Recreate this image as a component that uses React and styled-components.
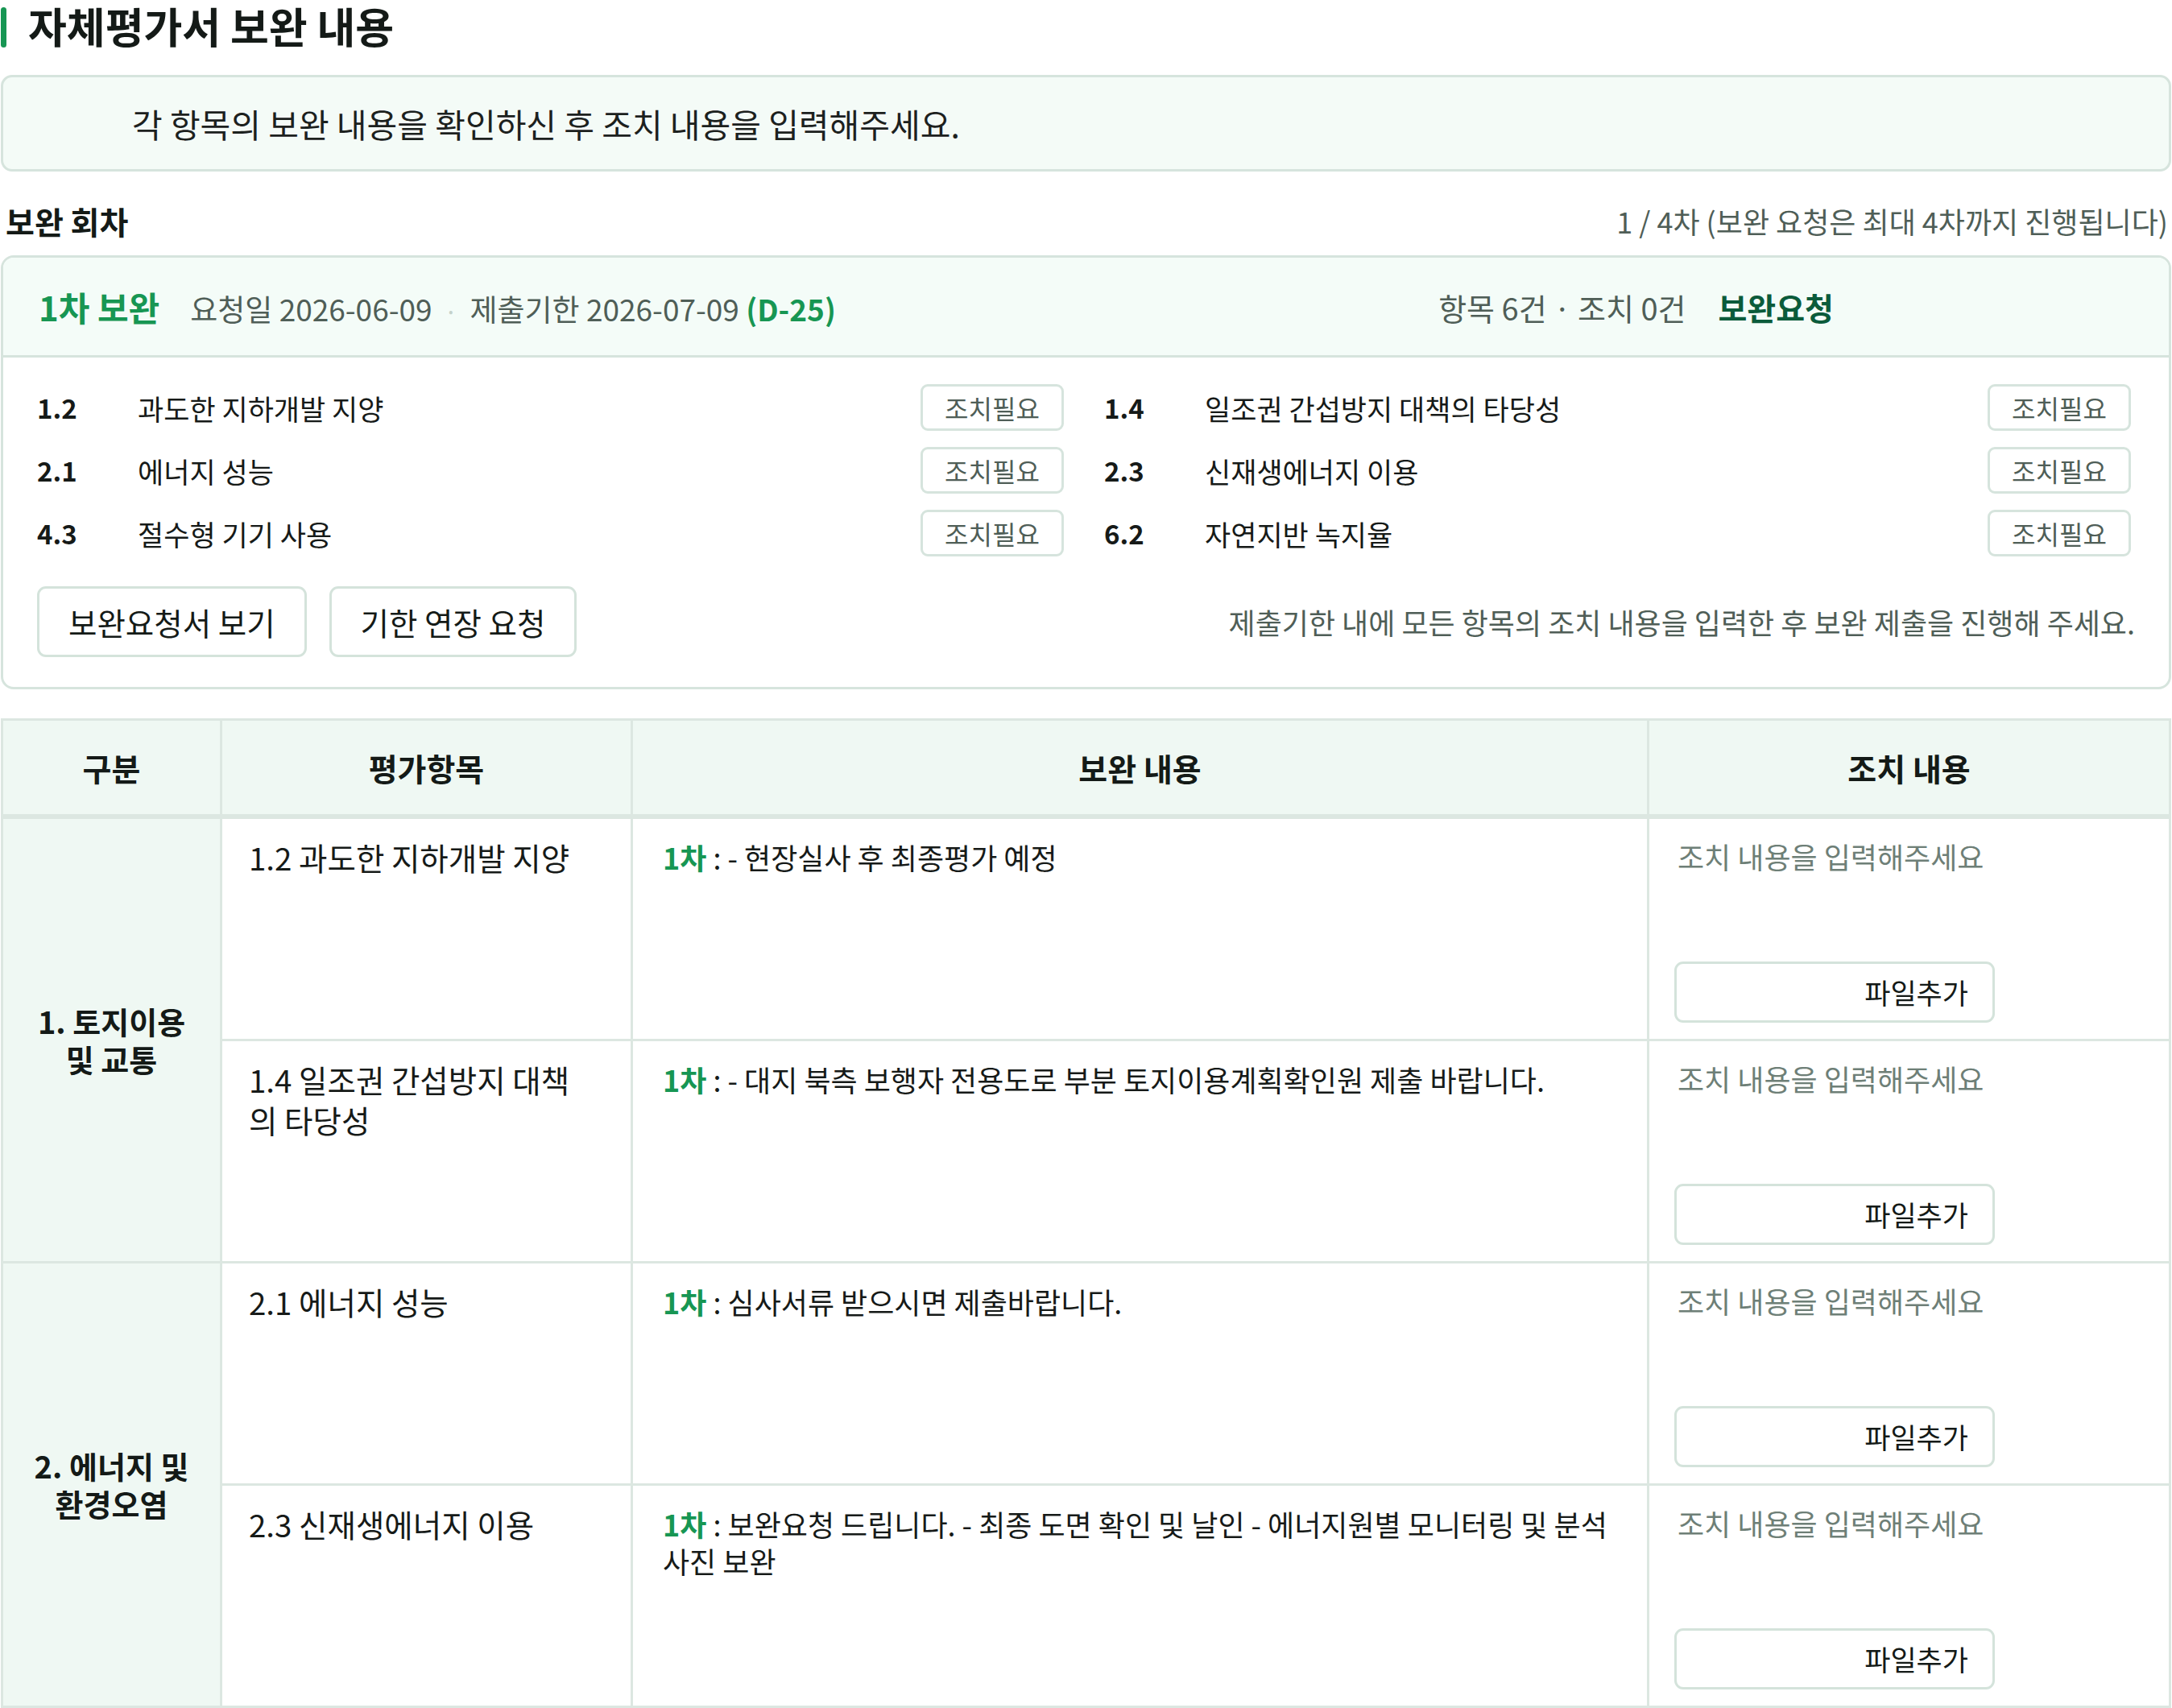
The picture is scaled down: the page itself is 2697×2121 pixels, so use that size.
import React from 'react';
import styled, { createGlobalStyle } from 'styled-components';

const GlobalStyle = createGlobalStyle`
    * { box-sizing: border-box; }
    body {
        margin: 0;
        background: #ffffff;
        color: #161a18;
        font-family: "Noto Sans CJK KR", "Noto Sans", sans-serif;
    }
`;

const Page = styled.div`
    padding: 0 1px;
`;

const Title = styled.h2`
    display: flex;
    align-items: center;
    gap: 27px;
    margin: 0;
    height: 64px;
    font-size: 52px;
    line-height: 64px;
    font-weight: 700;
    color: #141a17;
    &::before {
        content: '';
        width: 7px;
        height: 50px;
        margin-top: 4px;
        border-radius: 4px;
        background: #179653;
    }
`;

const Notice = styled.div`
    margin-top: 29px;
    padding: 31px 160px;
    border: 3px solid #d6e4dd;
    border-radius: 14px;
    background: #f4fbf7;
    font-size: 41px;
    line-height: 52px;
    color: #1c211e;
`;

const SectionRow = styled.div`
    display: flex;
    justify-content: space-between;
    align-items: center;
    margin-top: 36px;
    height: 50px;
    padding: 0 4px 0 6px;
`;

const SectionTitle = styled.h3`
    margin: 0;
    font-size: 39px;
    font-weight: 700;
    color: #141a17;
`;

const SectionMeta = styled.span`
    font-size: 36px;
    color: #4f5e57;
`;

const RoundCard = styled.section`
    margin-top: 18px;
    border: 3px solid #d6e4dd;
    border-radius: 16px;
    overflow: hidden;
`;

const RoundHeader = styled.div`
    display: flex;
    justify-content: space-between;
    align-items: center;
    height: 124px;
    padding: 0 44px;
    background: #f4fcf8;
    border-bottom: 3px solid #d6e4dd;
`;

const HeaderGroup = styled.div`
    display: flex;
    align-items: baseline;
    gap: ${({ gap }) => gap || 0}px;
    margin-right: ${({ offset }) => offset || 0}px;
`;

const RoundName = styled.strong`
    font-size: 42px;
    font-weight: 700;
    color: #179653;
    margin-right: 38px;
`;

const MetaText = styled.span`
    font-size: ${({ size }) => size || 37}px;
    color: #4f5e57;
`;

const Dot = styled.span`
    margin: 0 15px;
    font-size: 30px;
    color: #c5d2cb;
`;

const Dday = styled.b`
    color: #179653;
    font-weight: 700;
`;

const Status = styled.strong`
    font-size: 39px;
    font-weight: 700;
    color: #0b5b3b;
`;

const RoundBody = styled.div`
    padding: 33px 47px 37px 42px;
`;

const ItemGrid = styled.div`
    display: grid;
    grid-template-columns: 1fr 1fr;
    column-gap: 50px;
    row-gap: 20px;
`;

const ItemRow = styled.div`
    display: flex;
    align-items: center;
    height: 58px;
    font-size: 35px;
    color: #161a18;
`;

const ItemNo = styled.b`
    width: 125px;
    flex-shrink: 0;
    font-size: 33px;
    font-weight: 700;
`;

const ItemName = styled.span`
    flex: 1;
`;

const Badge = styled.span`
    display: flex;
    align-items: center;
    justify-content: center;
    width: 178px;
    height: 58px;
    border: 3px solid #d6e4dd;
    border-radius: 9px;
    background: #fff;
    font-size: 32px;
    color: #4f5e57;
`;

const ActionRow = styled.div`
    display: flex;
    align-items: center;
    justify-content: space-between;
    margin: 37px -5px 0 0;
`;

const ButtonGroup = styled.div`
    display: flex;
    gap: 28px;
`;

const OutlineButton = styled.button`
    height: 88px;
    padding: 0 36px;
    border: 3px solid #d4e3db;
    border-radius: 11px;
    background: #fff;
    font-family: inherit;
    font-size: 38.5px;
    color: #141a17;
    cursor: pointer;
`;

const Hint = styled.p`
    margin: 0;
    font-size: 36px;
    color: #4f5e57;
`;

const Table = styled.table`
    width: 100%;
    margin-top: 36px;
    border-collapse: collapse;
    table-layout: fixed;
    border: 3px solid #dce7e1;
`;

const Th = styled.th`
    height: 120px;
    background: #eff8f3;
    border: 3px solid #dce7e1;
    border-bottom-width: 6px;
    font-size: 39px;
    font-weight: 700;
    color: #141a17;
`;

const GroupCell = styled.td`
    padding: 0 30px;
    background: #eff8f3;
    border: 3px solid #dce7e1;
    text-align: center;
    vertical-align: middle;
    font-size: 38px;
    line-height: 47px;
    font-weight: 700;
    color: #141a17;
`;

const ItemCell = styled.td`
    padding: 22px 50px 0 33px;
    border: 3px solid #dce7e1;
    vertical-align: top;
    font-size: 38.5px;
    line-height: 50px;
    color: #161a18;
`;

const RequestCell = styled.td`
    padding: 24px 36px 0 37px;
    border: 3px solid #dce7e1;
    vertical-align: top;
    font-size: 36px;
    line-height: 46px;
    color: #161a18;
`;

const Round = styled.b`
    color: #179653;
    font-weight: 700;
`;

const ActionCell = styled.td`
    padding: 23px 40px 20px 31px;
    border: 3px solid #dce7e1;
    vertical-align: top;
`;

const ActionBox = styled.div`
    display: flex;
    flex-direction: column;
    gap: 20px;
`;

const ActionInput = styled.textarea`
    height: 134px;
    padding: 0 4px;
    border: none;
    outline: none;
    resize: none;
    font-family: inherit;
    font-size: 36px;
    line-height: 46px;
    color: #161a18;
    &::placeholder {
        color: #6e7f77;
    }
`;

const FileButton = styled.button`
    width: 398px;
    height: 76px;
    padding: 0 30px;
    border: 3px solid #d4e3db;
    border-radius: 11px;
    background: #fff;
    text-align: right;
    font-family: inherit;
    font-size: 35px;
    color: #141a17;
    cursor: pointer;
`;

const items = [
    { no: '1.2', name: '과도한 지하개발 지양' },
    { no: '1.4', name: '일조권 간섭방지 대책의 타당성' },
    { no: '2.1', name: '에너지 성능' },
    { no: '2.3', name: '신재생에너지 이용' },
    { no: '4.3', name: '절수형 기기 사용' },
    { no: '6.2', name: '자연지반 녹지율' },
];

const groups = [
    {
        title: ['1. 토지이용', '및 교통'],
        rows: [
            { item: '1.2 과도한 지하개발 지양', text: '- 현장실사 후 최종평가 예정' },
            { item: '1.4 일조권 간섭방지 대책의 타당성', text: '- 대지 북측 보행자 전용도로 부분 토지이용계획확인원 제출 바랍니다.' },
        ],
    },
    {
        title: ['2. 에너지 및', '환경오염'],
        rows: [
            { item: '2.1 에너지 성능', text: '심사서류 받으시면 제출바랍니다.' },
            { item: '2.3 신재생에너지 이용', text: '보완요청 드립니다. - 최종 도면 확인 및 날인 - 에너지원별 모니터링 및 분석 사진 보완' },
        ],
    },
];

const App = () => {
    return (
        <Page>
            <GlobalStyle />
            <Title>자체평가서 보완 내용</Title>
            <Notice>각 항목의 보완 내용을 확인하신 후 조치 내용을 입력해주세요.</Notice>

            <SectionRow>
                <SectionTitle>보완 회차</SectionTitle>
                <SectionMeta>1 / 4차 (보완 요청은 최대 4차까지 진행됩니다)</SectionMeta>
            </SectionRow>

            <RoundCard>
                <RoundHeader>
                    <HeaderGroup>
                        <RoundName>1차 보완</RoundName>
                        <MetaText>요청일 2026-06-09</MetaText>
                        <Dot>·</Dot>
                        <MetaText>제출기한 2026-07-09 <Dday>(D-25)</Dday></MetaText>
                    </HeaderGroup>
                    <HeaderGroup gap={40} offset={372}>
                        <MetaText size={38}>항목 6건 · 조치 0건</MetaText>
                        <Status>보완요청</Status>
                    </HeaderGroup>
                </RoundHeader>
                <RoundBody>
                    <ItemGrid>
                        {items.map(it => (
                            <ItemRow key={it.no}>
                                <ItemNo>{it.no}</ItemNo>
                                <ItemName>{it.name}</ItemName>
                                <Badge>조치필요</Badge>
                            </ItemRow>
                        ))}
                    </ItemGrid>
                    <ActionRow>
                        <ButtonGroup>
                            <OutlineButton>보완요청서 보기</OutlineButton>
                            <OutlineButton>기한 연장 요청</OutlineButton>
                        </ButtonGroup>
                        <Hint>제출기한 내에 모든 항목의 조치 내용을 입력한 후 보완 제출을 진행해 주세요.</Hint>
                    </ActionRow>
                </RoundBody>
            </RoundCard>

            <Table>
                <colgroup>
                    <col style={{ width: 272 }} />
                    <col style={{ width: 510 }} />
                    <col style={{ width: 1262 }} />
                    <col />
                </colgroup>
                <thead>
                    <tr>
                        <Th>구분</Th>
                        <Th>평가항목</Th>
                        <Th>보완 내용</Th>
                        <Th>조치 내용</Th>
                    </tr>
                </thead>
                <tbody>
                    {groups.map(g => g.rows.map((r, i) => (
                        <tr key={r.item}>
                            {i === 0 && (
                                <GroupCell rowSpan={g.rows.length}>
                                    {g.title[0]}<br />{g.title[1]}
                                </GroupCell>
                            )}
                            <ItemCell>{r.item}</ItemCell>
                            <RequestCell><Round>1차</Round> : {r.text}</RequestCell>
                            <ActionCell>
                                <ActionBox>
                                    <ActionInput placeholder="조치 내용을 입력해주세요" />
                                    <FileButton>파일추가</FileButton>
                                </ActionBox>
                            </ActionCell>
                        </tr>
                    )))}
                </tbody>
            </Table>
        </Page>
    );
};

export default App;
